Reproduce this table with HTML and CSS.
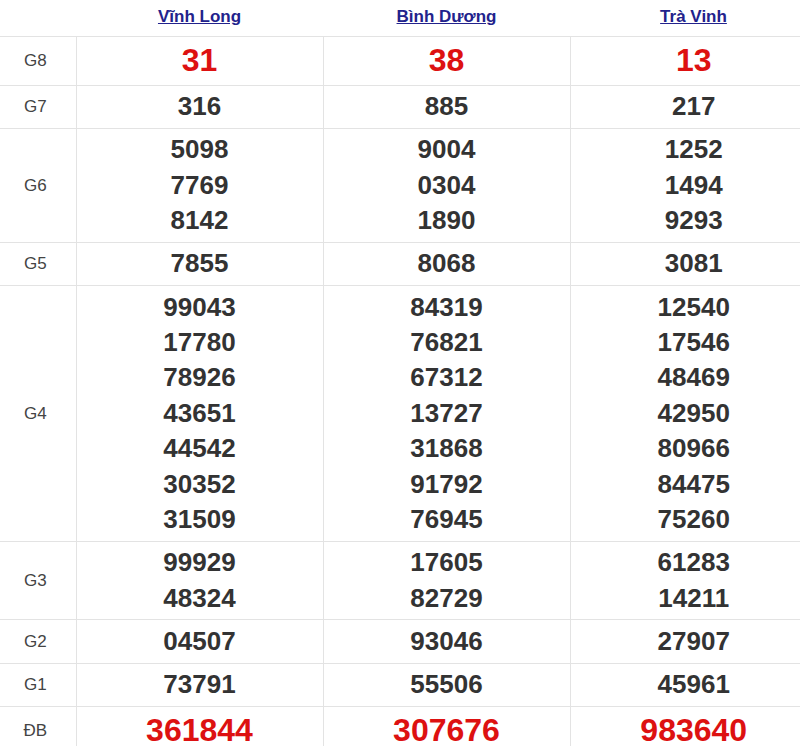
FILE: index.html
```html
<!DOCTYPE html>
<html lang="vi">
<head>
<meta charset="utf-8">
<title>Kết quả xổ số</title>
<link rel="stylesheet" href="styles.css">
</head>
<body>
<table class="kq">
  <colgroup>
    <col class="c-label">
    <col class="c-prov">
    <col class="c-prov">
    <col class="c-prov">
  </colgroup>
  <thead>
    <tr class="head">
      <th></th>
      <th><a href="#">Vĩnh Long</a></th>
      <th><a href="#">Bình Dương</a></th>
      <th><a href="#">Trà Vinh</a></th>
    </tr>
  </thead>
  <tbody>
    <tr class="big">
      <td class="lbl">G8</td>
      <td class="red">31</td>
      <td class="red">38</td>
      <td class="red">13</td>
    </tr>
    <tr>
      <td class="lbl">G7</td>
      <td>316</td>
      <td>885</td>
      <td>217</td>
    </tr>
    <tr>
      <td class="lbl">G6</td>
      <td><div>5098</div><div>7769</div><div>8142</div></td>
      <td><div>9004</div><div>0304</div><div>1890</div></td>
      <td><div>1252</div><div>1494</div><div>9293</div></td>
    </tr>
    <tr>
      <td class="lbl">G5</td>
      <td>7855</td>
      <td>8068</td>
      <td>3081</td>
    </tr>
    <tr>
      <td class="lbl">G4</td>
      <td><div>99043</div><div>17780</div><div>78926</div><div>43651</div><div>44542</div><div>30352</div><div>31509</div></td>
      <td><div>84319</div><div>76821</div><div>67312</div><div>13727</div><div>31868</div><div>91792</div><div>76945</div></td>
      <td><div>12540</div><div>17546</div><div>48469</div><div>42950</div><div>80966</div><div>84475</div><div>75260</div></td>
    </tr>
    <tr>
      <td class="lbl">G3</td>
      <td><div>99929</div><div>48324</div></td>
      <td><div>17605</div><div>82729</div></td>
      <td><div>61283</div><div>14211</div></td>
    </tr>
    <tr>
      <td class="lbl">G2</td>
      <td>04507</td>
      <td>93046</td>
      <td>27907</td>
    </tr>
    <tr>
      <td class="lbl">G1</td>
      <td>73791</td>
      <td>55506</td>
      <td>45961</td>
    </tr>
    <tr class="big">
      <td class="lbl">ĐB</td>
      <td class="red">361844</td>
      <td class="red">307676</td>
      <td class="red">983640</td>
    </tr>
  </tbody>
</table>
</body>
</html>
```

FILE: styles.css
```css
html, body {
  margin: 0;
  padding: 0;
  background: #fff;
  overflow: hidden;
}

body {
  width: 800px;
  height: 746px;
  font-family: "Liberation Sans", Arial, sans-serif;
}

.kq {
  border-collapse: collapse;
  table-layout: fixed;
  width: 817px;
}

.c-label { width: 76px; }
.c-prov { width: 247px; }

.head th {
  height: 34px;
  padding: 0 0 2px;
  border-bottom: 1px solid #e3e3e3;
  text-align: center;
  vertical-align: middle;
}

.head a {
  color: #22228c;
  font-size: 17px;
  font-weight: bold;
  text-decoration: underline;
}

tbody td {
  padding: 3.4px 0;
  border-bottom: 1px solid #e3e3e3;
  border-left: 1px solid #e3e3e3;
  text-align: center;
  vertical-align: middle;
  color: #333;
  font-size: 26px;
  font-weight: bold;
  line-height: 35.4px;
}

tbody td.lbl {
  border-left: none;
  padding-right: 5px;
  font-size: 17px;
  font-weight: normal;
  color: #444;
}

tbody td.red {
  color: #dd1111;
  font-size: 32px;
  line-height: 41px;
}
```
